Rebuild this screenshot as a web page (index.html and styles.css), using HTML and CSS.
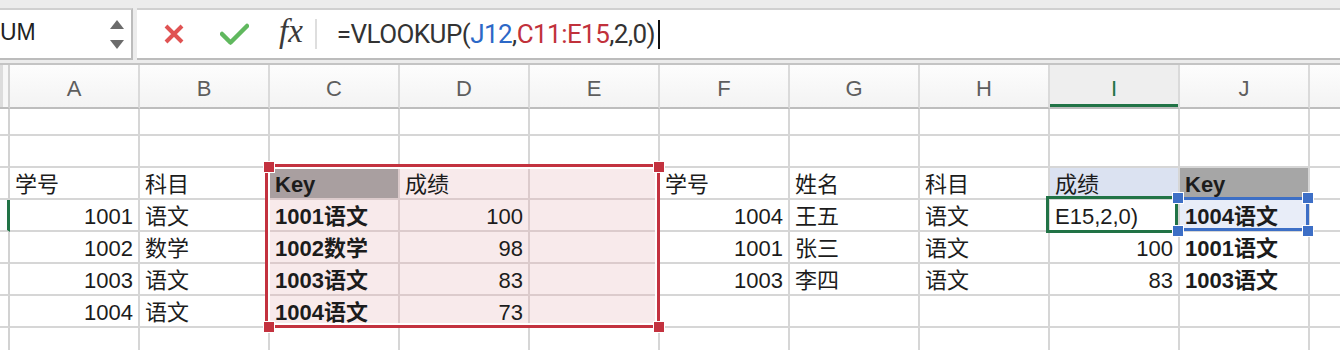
FILE: index.html
```html
<!DOCTYPE html>
<html lang="zh">
<head>
    <meta charset="UTF-8">
    <title>VLOOKUP</title>
    <link rel="stylesheet" href="styles.css">
</head>
<body>
    <div class="topbar">
        <div class="namebox">
            <div class="name">UM</div>
            <div class="spin"><span class="up"></span><span class="down"></span></div>
        </div>
        <div class="fbar">
            <svg class="ico-x" width="22" height="22" viewBox="0 0 22 22">
                <path d="M3 3 L19 19 M19 3 L3 19" stroke="#e05353" stroke-width="4" fill="none"/>
            </svg>
            <svg class="ico-ok" width="29" height="23" viewBox="0 0 29 23">
                <path d="M2 11 L10.5 19.5 L27 3" stroke="#60b85e" stroke-width="4.5" fill="none" stroke-linecap="round" stroke-linejoin="round"/>
            </svg>
            <span class="fx">fx</span>
            <span class="sep"></span>
            <div class="expr">=VLOOKUP(<span class="ref-b">J12</span>,<span class="ref-r">C11:E15</span>,2,0)<span class="caret"></span></div>
        </div>
    </div>

    <div class="sheet">
        <div class="row hdr">
            <div class="rh hcorner"></div>
            <div class="hc">A</div><div class="hc">B</div><div class="hc">C</div><div class="hc">D</div><div class="hc">E</div>
            <div class="hc">F</div><div class="hc">G</div><div class="hc">H</div><div class="hc on">I</div><div class="hc">J</div><div class="hc"></div>
        </div>

        <div class="row r27">
            <div class="rh"></div>
            <div class="c"></div><div class="c"></div><div class="c"></div><div class="c"></div><div class="c"></div>
            <div class="c"></div><div class="c"></div><div class="c"></div><div class="c"></div><div class="c"></div><div class="c"></div>
        </div>

        <div class="row">
            <div class="rh"></div>
            <div class="c"></div><div class="c"></div><div class="c"></div><div class="c"></div><div class="c"></div>
            <div class="c"></div><div class="c"></div><div class="c"></div><div class="c"></div><div class="c"></div><div class="c"></div>
        </div>

        <div class="row">
            <div class="rh"></div>
            <div class="c">学号</div>
            <div class="c">科目</div>
            <div class="c rng key-r b">Key</div>
            <div class="c rng">成绩</div>
            <div class="c rng"></div>
            <div class="c">学号</div>
            <div class="c">姓名</div>
            <div class="c">科目</div>
            <div class="c hl-i">成绩</div>
            <div class="c key-j b">Key</div>
            <div class="c"></div>
        </div>

        <div class="row">
            <div class="rh active"></div>
            <div class="c num">1001</div>
            <div class="c">语文</div>
            <div class="c rng b">1001语文</div>
            <div class="c rng num">100</div>
            <div class="c rng"></div>
            <div class="c num">1004</div>
            <div class="c">王五</div>
            <div class="c">语文</div>
            <div class="c">E15,2,0)</div>
            <div class="c sel b">1004语文</div>
            <div class="c"></div>
        </div>

        <div class="row">
            <div class="rh"></div>
            <div class="c num">1002</div>
            <div class="c">数学</div>
            <div class="c rng b">1002数学</div>
            <div class="c rng num">98</div>
            <div class="c rng"></div>
            <div class="c num">1001</div>
            <div class="c">张三</div>
            <div class="c">语文</div>
            <div class="c num">100</div>
            <div class="c b">1001语文</div>
            <div class="c"></div>
        </div>

        <div class="row">
            <div class="rh"></div>
            <div class="c num">1003</div>
            <div class="c">语文</div>
            <div class="c rng b">1003语文</div>
            <div class="c rng num">83</div>
            <div class="c rng"></div>
            <div class="c num">1003</div>
            <div class="c">李四</div>
            <div class="c">语文</div>
            <div class="c num">83</div>
            <div class="c b">1003语文</div>
            <div class="c"></div>
        </div>

        <div class="row">
            <div class="rh"></div>
            <div class="c num">1004</div>
            <div class="c">语文</div>
            <div class="c rng b">1004语文</div>
            <div class="c rng num">73</div>
            <div class="c rng"></div>
            <div class="c"></div><div class="c"></div><div class="c"></div><div class="c"></div><div class="c"></div><div class="c"></div>
        </div>

        <div class="row">
            <div class="rh"></div>
            <div class="c"></div><div class="c"></div><div class="c"></div><div class="c"></div><div class="c"></div>
            <div class="c"></div><div class="c"></div><div class="c"></div><div class="c"></div><div class="c"></div><div class="c"></div>
        </div>

        <!-- range / selection overlays -->
        <div class="range-box"></div>
        <span class="hd red tl"></span><span class="hd red tr"></span>
        <span class="hd red bl"></span><span class="hd red br"></span>

        <div class="active-box"></div>
        <div class="ref-box"></div>
        <span class="hd blue jtl"></span><span class="hd blue jtr"></span>
        <span class="hd blue jbl"></span><span class="hd blue jbr"></span>
    </div>
</body>
</html>
```

FILE: styles.css
```css
body {
    margin: 0;
    padding: 0;
    width: 1340px;
    height: 350px;
    overflow: hidden;
    background: #fff;
    font-family: "Liberation Sans", "Noto Sans CJK SC", sans-serif;
    color: #1c1c1c;
}

/* formula bar */
.topbar {
    display: flex;
    height: 65px;
    box-sizing: border-box;
    padding: 8px 0 3px;
    background: #ececec;
    border-bottom: 2px solid #c4c4c4;
}

.namebox {
    width: 133px;
    box-sizing: border-box;
    display: flex;
    align-items: center;
    background: #fff;
    border-top: 2px solid #d0d0d0;
    border-right: 2px solid #bcbcbc;
    border-bottom: 2px solid #bcbcbc;
}

.name {
    flex: 1;
    font-size: 23px;
    color: #222;
    padding-bottom: 3px;
}

.spin {
    display: flex;
    flex-direction: column;
    gap: 11px;
    margin-right: 7px;
}

.spin .up {
    border-left: 7px solid transparent;
    border-right: 7px solid transparent;
    border-bottom: 9px solid #6b6b6b;
}

.spin .down {
    border-left: 7px solid transparent;
    border-right: 7px solid transparent;
    border-top: 9px solid #6b6b6b;
}

.fbar {
    flex: 1;
    margin-left: 4px;
    display: flex;
    align-items: center;
    background: #fff;
    border-top: 2px solid #d0d0d0;
    border-bottom: 2px solid #bcbcbc;
}

.ico-x {
    margin-left: 26px;
}

.ico-ok {
    margin-left: 35px;
}

.fx {
    margin-left: 30px;
    font-family: "Liberation Serif", serif;
    font-style: italic;
    font-size: 33px;
    color: #3a3a3a;
    padding-bottom: 5px;
}

.sep {
    width: 2px;
    height: 30px;
    margin-left: 12px;
    background: #dedede;
}

.expr {
    margin-left: 20px;
    display: flex;
    align-items: center;
    font-family: Roboto, "Liberation Sans", sans-serif;
    font-size: 26px;
    letter-spacing: -0.55px;
    color: #333;
}

.ref-b {
    color: #2c68c7;
}

.ref-r {
    color: #c1313b;
}

.caret {
    width: 2px;
    height: 29px;
    margin-left: 3px;
    background: #111;
}

/* sheet grid */
.sheet {
    position: relative;
}

.row {
    display: flex;
    height: 32px;
}

.row.hdr {
    height: 44px;
}

.row.r27 {
    height: 27px;
}

.rh {
    width: 10px;
    flex: none;
    box-sizing: border-box;
    border-right: 2px solid #d2d2d2;
    border-bottom: 2px solid #d6d6d6;
}

.rh.hcorner {
    background: linear-gradient(90deg, #dcdcdc 3px, #f7f7f7 3px);
    border-bottom-color: #bdbdbd;
}

.rh.active {
    border-right: 3px solid #217346;
}

.hc {
    width: 130px;
    flex: none;
    box-sizing: border-box;
    padding-top: 5px;
    line-height: 37px;
    text-align: center;
    font-size: 22px;
    color: #5e5e5e;
    background: linear-gradient(#fdfdfd, #f3f3f3);
    border-right: 2px solid #dadada;
    border-bottom: 2px solid #bdbdbd;
}

.hc.on {
    background: #eeeeee;
    color: #217346;
    box-shadow: inset 0 -3px 0 #217346;
}

.c {
    width: 130px;
    flex: none;
    box-sizing: border-box;
    padding: 3px 5px 0;
    line-height: 27px;
    font-size: 22px;
    white-space: nowrap;
    overflow: hidden;
    border-right: 2px solid #d6d6d6;
    border-bottom: 2px solid #d6d6d6;
}

.num {
    text-align: right;
}

.b {
    font-weight: bold;
}

.rng {
    background: #f8eaeb;
    border-color: #dccbcc;
}

.key-r {
    background: #a99fa0;
}

.hl-i {
    background: #dbe2f1;
}

.key-j {
    background: #a6a6a6;
}

.sel {
    background: #e8edf8;
}

/* overlays */
.range-box {
    position: absolute;
    left: 265px;
    top: 99px;
    width: 395px;
    height: 164px;
    box-sizing: border-box;
    border: 3px solid #c3323f;
    box-shadow: inset 0 0 0 2px #fff;
}

.hd {
    position: absolute;
    width: 10px;
    height: 10px;
    border: 1px solid #fff;
}

.hd.red { background: #c3323f; }
.hd.blue { background: #3d6fc6; }

.tl { left: 263px; top: 96px; }
.tr { left: 653px; top: 96px; }
.bl { left: 263px; top: 256px; }
.br { left: 653px; top: 256px; }

.active-box {
    position: absolute;
    left: 1046px;
    top: 131px;
    width: 132px;
    height: 37px;
    box-sizing: border-box;
    border: 3px solid #217346;
}

.ref-box {
    position: absolute;
    left: 1178px;
    top: 132px;
    width: 131px;
    height: 34px;
    box-sizing: border-box;
    border: 3px solid #3d6fc6;
    border-left: none;
}

.jtl { left: 1172px; top: 127px; }
.jtr { left: 1302px; top: 127px; }
.jbl { left: 1172px; top: 160px; }
.jbr { left: 1302px; top: 160px; }
```
